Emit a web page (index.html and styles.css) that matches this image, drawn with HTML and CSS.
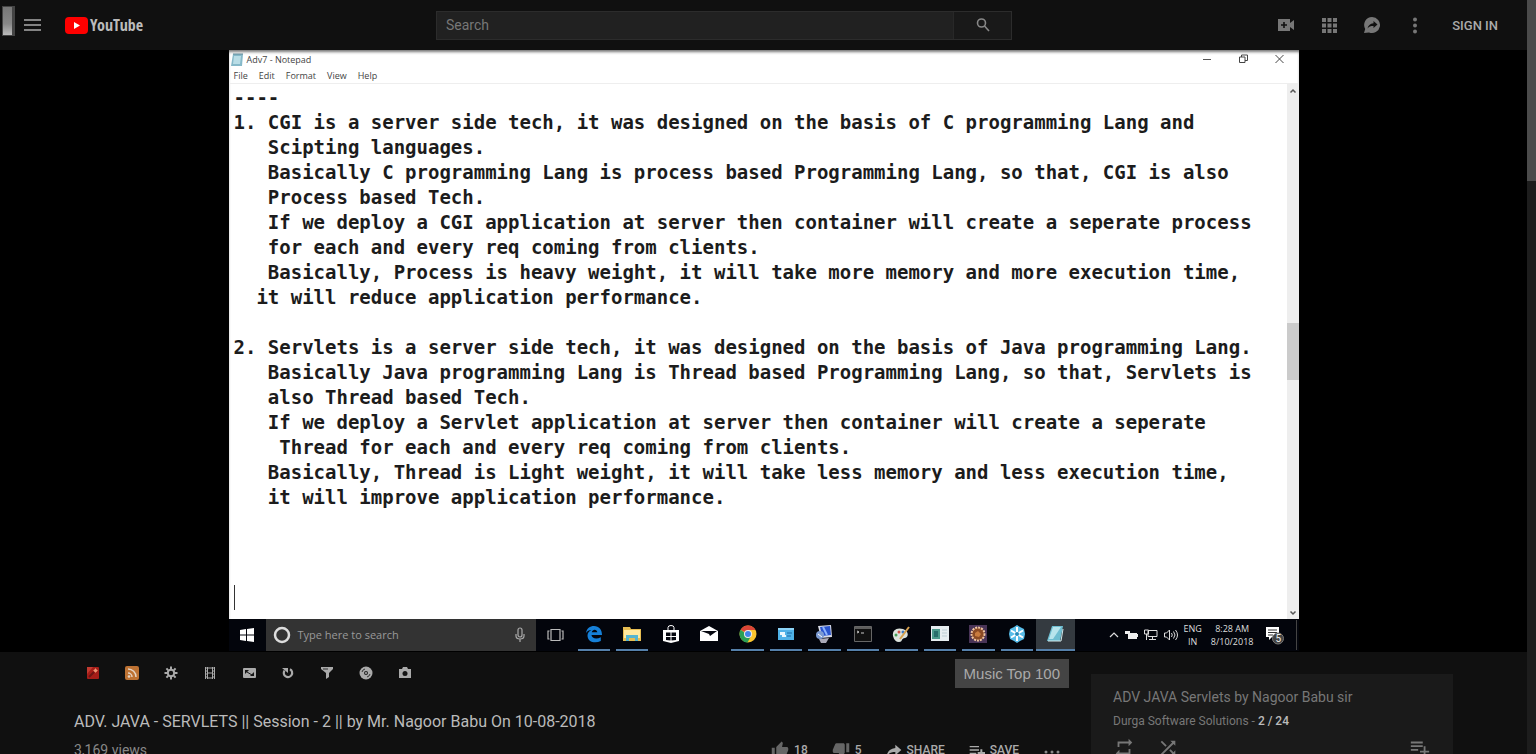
FILE: index.html
```html
<!DOCTYPE html>
<html lang="en">
<head>
<meta charset="utf-8">
<title>ADV. JAVA - SERVLETS || Session - 2 - YouTube</title>
<link rel="stylesheet" href="styles.css">
</head>
<body>
<div class="page">
  <header class="masthead">
    <span class="side-tab"></span>
    <button class="icon-btn menu" aria-label="Menu"><svg width="18" height="14" viewBox="0 0 18 14" stroke="#aaa" stroke-width="1.6"><path d="M0 2h17M0 7h17M0 12h17"/></svg></button>
    <a class="logo" href="#"><svg width="23" height="17" viewBox="0 0 23 17"><rect width="23" height="17" rx="4" fill="#f00"/><path d="M9 5l6 3.500-6 3.500z" fill="#fff"/></svg><span class="logo-text">YouTube</span></a>
    <form class="search">
      <input type="text" placeholder="Search" aria-label="Search">
      <button type="button" aria-label="Search"><svg width="16" height="16" viewBox="0 0 16 16" fill="none" stroke="#888" stroke-width="1.600"><circle cx="6.500" cy="6" r="4"/><path d="M9.500 9l4.500 5"/></svg></button>
    </form>
    <nav class="top-actions">
      <button class="icon-btn" aria-label="Create"><svg width="20" height="20" viewBox="0 0 20 20"><path fill="#777" d="M2 4h12v4l4-3v10l-4-3v4H2z"/><path d="M8 7v6M5 10h6" stroke="#101010" stroke-width="1.600"/></svg></button>
      <button class="icon-btn" aria-label="Apps"><svg width="20" height="20" viewBox="0 0 20 20" fill="#777"><path d="M3 3h4v4H3zM8.500 3h4v4h-4zM14 3h4v4h-4zM3 8.500h4v4H3zM8.500 8.500h4v4h-4zM14 8.500h4v4h-4zM3 14h4v4H3zM8.500 14h4v4h-4zM14 14h4v4h-4z"/></svg></button>
      <button class="icon-btn" aria-label="Messages"><svg width="20" height="20" viewBox="0 0 20 20"><path fill="#777" d="M10 2a8 8 0 1 1-3 15.400L2 18l1.200-4A8 8 0 0 1 10 2z"/><path fill="#101010" d="M11.500 6l4 3.500-4 3.500v-2c-3 0-4.500.6-6 2.500.5-3 2.500-5 6-5.300z"/></svg></button>
      <button class="icon-btn" aria-label="Settings"><svg width="20" height="20" viewBox="0 0 20 20" fill="#777"><circle cx="10" cy="4.500" r="2"/><circle cx="10" cy="10.500" r="2"/><circle cx="10" cy="16.500" r="2"/></svg></button>
    </nav>
    <a class="sign-in" href="#">SIGN IN</a>
  </header>

  <section class="player">
    <div class="video">
      <div class="titlebar">
        <svg width="12" height="13" viewBox="0 0 12 13"><path d="M2 1h10l-1 12H0z" fill="#86b9c9"/><path d="M3 3h7l-1 8H2z" fill="#b9dde6"/><path d="M2 1h10" stroke="#658a98"/></svg>
        <span>Adv7 - Notepad</span>
        <div class="win-buttons">
          <svg width="9" height="10" viewBox="0 0 9 10" stroke="#555"><path d="M0 5.500h8"/></svg>
          <svg width="9" height="10" viewBox="0 0 9 10" fill="none" stroke="#444"><path d="M.5 3h5.500v5.500H.5zM2.500 3V1h6v5.500H6"/></svg>
          <svg width="9" height="10" viewBox="0 0 9 10" stroke="#444"><path d="M.5 1l8 8M8.500 1l-8 8"/></svg>
        </div>
      </div>
      <div class="menubar"><span>File</span><span>Edit</span><span>Format</span><span>View</span><span>Help</span></div>
      <div class="editor">
<pre>----
1. CGI is a server side tech, it was designed on the basis of C programming Lang and
   Scipting languages.
   Basically C programming Lang is process based Programming Lang, so that, CGI is also
   Process based Tech.
   If we deploy a CGI application at server then container will create a seperate process
   for each and every req coming from clients.
   Basically, Process is heavy weight, it will take more memory and more execution time,
  it will reduce application performance.

2. Servlets is a server side tech, it was designed on the basis of Java programming Lang.
   Basically Java programming Lang is Thread based Programming Lang, so that, Servlets is
   also Thread based Tech.
   If we deploy a Servlet application at server then container will create a seperate
    Thread for each and every req coming from clients.
   Basically, Thread is Light weight, it will take less memory and less execution time,
   it will improve application performance.


<span class="blank"></span>
<span class="caret"></span></pre>
        <div class="editor-scroll">
          <svg width="8" height="6" viewBox="0 0 8 6" fill="none" stroke="#555" stroke-width="1.500"><path d="M1.500 4.500L4 2l2.500 2.500"/></svg>
          <span class="editor-thumb"></span>
          <svg width="8" height="6" viewBox="0 0 8 6" fill="none" stroke="#555" stroke-width="1.500"><path d="M1.500 1.500L4 4l2.500-2.500"/></svg>
        </div>
      </div>
      <div class="taskbar">
        <div class="start"><svg width="14" height="14" viewBox="0 0 14 14" fill="#fff"><path d="M0 2l6-1v5.500H0zM7 1l7-1v6.500H7zM0 7.500h6V13l-6-1zM7 7.500h7V14l-7-1z"/></svg></div>
        <div class="task-search">
          <svg width="18" height="18" viewBox="0 0 18 18" fill="none" stroke="#ddd" stroke-width="2.500"><circle cx="9" cy="9" r="7"/></svg>
          <span>Type here to search</span>
          <svg width="12" height="16" viewBox="0 0 12 16" fill="none" stroke="#aaa" stroke-width="1.200"><rect x="4" y="1" width="4" height="9" rx="2"/><path d="M2 7v2a4 3 0 0 0 8 0V7M6 12v3"/></svg>
        </div>
        <div class="task-view"><svg width="17" height="14" viewBox="0 0 17 14" fill="none" stroke="#bbb" stroke-width="1.200"><path d="M4 1.500h9v11H4zM2.500 3H1v8h1.500M14.500 3H16v8h-1.500"/></svg></div>
        <div class="apps">
          <span class="app open"><svg width="18" height="18" viewBox="0 0 18 18"><path fill="#1680d8" d="M1 8c.6-4.500 4-7 8-7 5 0 8 3.500 8 9H6.500c.3 3.500 5 4.500 9.300 2.200V16C10 19 2.500 17 2.500 10.500 2.500 8 4 6 6.500 5 4 5 2.200 6.200 1 8zm5.700-.8h5.600C12 3.800 7.500 3.800 6.700 7.200z"/></svg></span>
          <span class="app open"><svg width="18" height="16" viewBox="0 0 18 16"><path fill="#e6bd52" d="M0 1h7l1 2h10v12H0z"/><path fill="#ffe9a0" d="M1 4h16v8H1z"/><path fill="#55b5d0" d="M3 9h12v6h-3v-3H6v3H3z"/></svg></span>
          <span class="app"><svg width="18" height="18" viewBox="0 0 18 18"><path d="M6 5V2.500a3 2 0 0 1 6 0V5" fill="none" stroke="#fff"/><path d="M1 5h16v11l-8 2-8-2z" fill="#fff"/><path fill="#05070f" d="M4 7.500h4.500v3.500H4zM9.500 7.500H14V11H9.500zM4 12h4.500v3.500L4 15zM9.500 12H14v3l-4.500.5z"/></svg></span>
          <span class="app"><svg width="20" height="16" viewBox="0 0 20 16"><path d="M1 5l9-5 9 5v10H1z" fill="#fff"/><path d="M2 5h16l-7 5-1-2z" fill="#05070f"/></svg></span>
          <span class="app open"><svg width="18" height="18" viewBox="0 0 18 18"><circle cx="9" cy="9" r="8.500" fill="#fbc52f"/><path d="M9 9L1.600 4.800A8.500 8.500 0 0 1 16.500 5H9z" fill="#dc4437"/><path d="M1.600 4.800A8.500 8.500 0 0 0 8.500 17.500L11.500 12z" fill="#2b9f56"/><circle cx="9" cy="9" r="4" fill="#eee"/><circle cx="9" cy="9" r="3" fill="#4285e8"/></svg></span>
          <span class="app open"><svg width="18" height="14" viewBox="0 0 18 14"><path d="M1 1h16v12H1z" fill="#4fb2e8"/><path d="M1 1h16v2H1z" fill="#8cd4f8"/><path d="M3 5h5v3H3zM5 8h4v2H5z" fill="#e6f7ff"/><path d="M10 6h5M10 9h4" stroke="#1b6aa8"/></svg></span>
          <span class="app open"><svg width="18" height="18" viewBox="0 0 18 18"><path d="M3 1l13-1 1 12-11 1z" fill="#d9dce8"/><path d="M5 2l10-1 1 9-9 1z" fill="#2853cd"/><path d="M8 2l4 8" stroke="#8fb5ff" stroke-width="2"/><path d="M4 14l10-1-3 5H6z" fill="#aaa9b8"/><circle cx="5" cy="10" r="4" fill="#7c9bd3"/><path d="M3 9l4 3" stroke="#fff"/></svg></span>
          <span class="app open"><svg width="18" height="16" viewBox="0 0 18 16"><path d="M.5.5h17v15H.5z" fill="#111" stroke="#666"/><path d="M1 2h16" stroke="#aaa"/><path d="M3 5l2 1-2 1M7 7h3" fill="none" stroke="#ccc"/></svg></span>
          <span class="app open"><svg width="20" height="18" viewBox="0 0 20 18"><path d="M2 11C1 5 6 2 12 4c6 2 6 8 2 9-4 0-2 4-6 4-3 0-5-2-6-6z" fill="#dce2dc"/><circle cx="5" cy="10" r="1.500" fill="#45a058"/><circle cx="8" cy="7" r="1.500" fill="#ce5143"/><circle cx="12" cy="7" r="1.500" fill="#3d79c1"/><path d="M9 14l9-12" stroke="#d6a04e" stroke-width="2"/></svg></span>
          <span class="app open"><svg width="18" height="16" viewBox="0 0 18 16"><path d="M0 0h18v15H0z" fill="#e6edf0"/><path d="M1 3h8v10H1z" fill="#4c9a8c"/><path d="M3 5h4v6H3z" fill="#286e6b"/><path d="M11 4h5M11 7h5M11 10h5" stroke="#bbcdd3"/></svg></span>
          <span class="app open"><svg width="18" height="18" viewBox="0 0 18 18"><path d="M0 0h18v18H0z" fill="#493457"/><circle cx="9" cy="9" r="6.500" fill="#8b4b25" stroke="#f0c6a2" stroke-width="2" stroke-dasharray="2 1"/><path d="M6 8l3-2 3 3-2 3-4-1z" fill="#c87b3e"/></svg></span>
          <span class="app open"><svg width="18" height="18" viewBox="0 0 18 18"><path d="M9 0l3 2 4 2 1 5-1 5-4 2-3 2-3-2-4-2-1-5 1-5 4-2z" fill="#58bde9"/><path d="M9 2v14M3 5.500l12 7M3 12.500l12-7" stroke="#fff" stroke-width="2"/><circle cx="9" cy="9" r="2" fill="#248bbb"/></svg></span>
          <span class="app open active"><svg width="18" height="18" viewBox="0 0 18 18"><path d="M6 1h11l-3 15H1z" fill="#6ebdd0"/><path d="M7 2h8L7 14H3z" fill="#b7e4ec"/><path d="M2 16h13l2-12" fill="none" stroke="#d5ebed"/></svg></span>
        </div>
        <div class="tray">
          <svg width="10" height="8" viewBox="0 0 10 8" fill="none" stroke="#ddd" stroke-width="1.200"><path d="M1 6l4-4 4 4"/></svg>
          <svg width="13" height="10" viewBox="0 0 13 10" fill="#eee"><path d="M3 3h9v6H3zM0 1h5v3H0zM12 4h1v3h-1z"/></svg>
          <svg width="14" height="12" viewBox="0 0 14 12" fill="none" stroke="#ddd"><path d="M4 1.500h9v6H4zM8.500 8v2M5 10.500h7M.5 1h4v4h-4zM2.500 5v6"/></svg>
          <svg width="14" height="12" viewBox="0 0 14 12" fill="none" stroke="#ddd"><path d="M.5 4h2l3-3v10l-3-3h-2zM7.500 4q1.500 2 0 4M9.500 2.500q3 3.500 0 7M11.500 1q4 5 0 10"/></svg>
          <span class="tray-text">ENG<br>IN</span>
          <span class="tray-text clock">8:28 AM<br>8/10/2018</span>
          <svg class="notice" width="20" height="20" viewBox="0 0 20 20"><path d="M1 2h13v10H7l-3 3v-3H1z" fill="#fff"/><path d="M3 5h9M3 7.500h9M3 10h5" stroke="#333"/><circle cx="13" cy="13.500" r="5.500" fill="#444" stroke="#777"/><text x="10.500" y="17" font-size="10" fill="#eee">5</text></svg>
          <span class="show-desktop"></span>
        </div>
      </div>
    </div>
  </section>

  <main class="below">
    <section class="primary">
      <div class="tools">
        <button class="icon-btn" aria-label="Magic"><svg width="14" height="14" viewBox="0 0 14 14"><rect x="1" y="1" width="12" height="12" rx="1" fill="#a51d18"/><path d="M1 1h6L1 8z" fill="#c23a30"/><path d="M3 11l5-5" stroke="#6c1515" stroke-width="2"/><circle cx="9.500" cy="4.500" r="1.500" fill="#ffb08a"/><path d="M9.500 2v5M7 4.500h5" stroke="#e8896a" stroke-width=".6"/></svg></button>
        <button class="icon-btn" aria-label="Feed"><svg width="14" height="14" viewBox="0 0 14 14"><rect width="14" height="14" rx="2" fill="#bd7233"/><g fill="none" stroke="#e4d4c5" stroke-width="1.500"><path d="M3 7a4 4 0 0 1 4 4M3 3a8 8 0 0 1 8 8"/></g><circle cx="4" cy="10.500" r="1.300" fill="#e4d4c5"/></svg></button>
        <button class="icon-btn" aria-label="Options"><svg width="14" height="14" viewBox="0 0 14 14" fill="none" stroke="#aaa"><circle cx="7" cy="7" r="3.200" stroke-width="2"/><path stroke-width="2" d="M7 .5V3M7 11v2.500M.5 7H3M11 7h2.500M2.400 2.400l1.800 1.800M9.800 9.800l1.800 1.800M11.600 2.400L9.800 4.200M4.200 9.800l-1.800 1.800"/></svg></button>
        <button class="icon-btn" aria-label="Cinema"><svg width="14" height="14" viewBox="0 0 14 14" fill="none" stroke="#aaa"><path d="M2.500 1v12M4.500 1v12M9.500 1v12M11.500 1v12M2 2h3M2 5h3M2 8h3M2 11h3M9 2h3M9 5h3M9 8h3M9 11h3M5 2h4M5 7h4M5 12h4"/></svg></button>
        <button class="icon-btn" aria-label="Resize"><svg width="14" height="14" viewBox="0 0 14 14"><rect x="1" y="2" width="13" height="10" rx="1" fill="#aaa"/><path d="M3 4h4L3 8zM12 10H8l4-4z" fill="#151515"/><path d="M5 6l5 3" stroke="#151515"/></svg></button>
        <button class="icon-btn" aria-label="Repeat"><svg width="14" height="14" viewBox="0 0 14 14"><path d="M9 3.200a4.200 4.200 0 1 1-5.500 1.300" fill="none" stroke="#aaa" stroke-width="2.200"/><path d="M1 2h6v5z" fill="#aaa"/></svg></button>
        <button class="icon-btn" aria-label="Filter"><svg width="14" height="14" viewBox="0 0 14 14"><path d="M1 1h12v2L9 7v4l-3 2V7L1 3z" fill="#aaa"/><path d="M3 3h5" stroke="#333"/></svg></button>
        <button class="icon-btn" aria-label="Disc"><svg width="14" height="14" viewBox="0 0 14 14"><circle cx="7" cy="7" r="6.500" fill="#aaa"/><circle cx="7" cy="7" r="2" fill="#222"/><circle cx="7" cy="7" r="1" fill="#aaa"/><path d="M3 6a4 4 0 0 1 3-3M11 8a4 4 0 0 1-3 3" fill="none" stroke="#333"/></svg></button>
        <button class="icon-btn" aria-label="Screenshot"><svg width="14" height="14" viewBox="0 0 14 14"><path d="M1 3h3l1-2h4l1 2h3v9H1z" fill="#aaa"/><circle cx="7" cy="7.500" r="2.500" fill="#151515"/></svg></button>
        <button class="music">Music Top 100</button>
      </div>
      <h1>ADV. JAVA - SERVLETS || Session - 2 || by Mr. Nagoor Babu On 10-08-2018</h1>
      <div class="info">
        <span class="views">3,169 views</span>
        <div class="actions">
          <button class="like"><svg width="18" height="18" viewBox="0 0 24 24" fill="#666"><path d="M1 21h4V9H1v12zm22-11c0-1.100-.9-2-2-2h-6.300l1-4.600c.1-.8-.1-1.300-.5-1.700L14.200.6 7.600 7.200C7.200 7.600 7 8.100 7 8.600V19c0 1.100.9 2 2 2h9c.8 0 1.500-.5 1.800-1.200l3-7c.1-.3.2-.5.2-.8z"/></svg>18</button>
          <button class="dislike"><svg width="18" height="18" viewBox="0 0 24 24" fill="#666"><path d="M15 3H6c-.8 0-1.500.5-1.800 1.200l-3 7c-.1.300-.2.500-.2.800v2c0 1.100.9 2 2 2h6.300l-1 4.600c-.1.800.1 1.300.5 1.700l1 1.100 6.600-6.600c.4-.4.600-.9.600-1.400V5c0-1.100-.9-2-2-2zm4 0v12h4V3z"/></svg>5</button>
          <button class="share"><svg width="16" height="18" viewBox="0 0 24 24" fill="#aaa"><path d="M14 9V4l9 8-9 8v-5C8 15 4 17 1 21c1-7 5-11 13-12z"/></svg>SHARE</button>
          <button class="save"><svg width="16" height="18" viewBox="0 0 24 24" fill="#aaa"><path d="M1 6h14v2H1zM1 11h14v2H1zM1 16h10v2H1zM17 11h3v4h4v3h-4v4h-3v-4h-4v-3h4z"/></svg>SAVE</button>
          <button class="more" aria-label="More"><svg width="18" height="18" viewBox="0 0 18 18" fill="#888"><circle cx="3" cy="11" r="1.500"/><circle cx="9" cy="11" r="1.500"/><circle cx="15" cy="11" r="1.500"/></svg></button>
        </div>
      </div>
    </section>
    <aside class="playlist">
      <h2>ADV JAVA Servlets by Nagoor Babu sir</h2>
      <p>Durga Software Solutions - <b>2 / 24</b></p>
      <div class="playlist-actions">
        <button class="icon-btn" aria-label="Loop"><svg width="22" height="22" viewBox="0 0 24 24" fill="#777"><path d="M7 7h10v3l4-4-4-4v3H5v6h2zM17 17H7v-3l-4 4 4 4v-3h12v-6h-2z"/></svg></button>
        <button class="icon-btn" aria-label="Shuffle"><svg width="22" height="22" viewBox="0 0 24 24" fill="#777"><path d="M10.600 9.200L5.400 4 4 5.400l5.200 5.200zM14.500 4l2 2L4 18.600 5.400 20 18 7.500l2 2V4zm.3 9.400l-1.400 1.400 3.100 3.100-2 2.100H20v-5.500l-2 2z"/></svg></button>
        <button class="icon-btn save-list" aria-label="Save playlist"><svg width="22" height="22" viewBox="0 0 24 24" fill="#777"><path d="M2 5h13v2H2zM2 9h13v2H2zM2 13h8v2H2zM16 10h2v5h4v2h-4v4h-2v-4h-4v-2h4z"/></svg></button>
      </div>
    </aside>
  </main>
</div>
<div class="page-scroll"><span></span></div>
</body>
</html>
```
FILE: styles.css
```css
* { box-sizing: border-box; }
body { margin: 0; height: 100vh; overflow: hidden; display: flex; background: #101010; color: #aaa; font-family: Roboto, "Liberation Sans", sans-serif; }
button { font: inherit; color: inherit; background: none; border: 0; padding: 0; }
svg { display: block; flex: none; }
a { color: inherit; text-decoration: none; }
.page { flex: 1; min-width: 0; }
.page-scroll { width: 9px; background: #1d1d1d; }
.page-scroll span { display: block; height: 24%; background: #4b4b4b; }
.icon-btn { display: flex; align-items: center; justify-content: center; }

.masthead { display: flex; align-items: center; height: 50px; background: #101010; }
.side-tab { width: 13px; height: 30px; margin: 0 9px 8px 2px; border: 1px solid #444; border-right: 3px solid #444; background: linear-gradient(#777, #888 60%, #bbb); }
.menu { margin-right: 23px; }
.logo { display: flex; align-items: center; gap: 2px; width: 371px; }
.logo-text { font-family: "Open Sans Condensed", "Roboto Condensed", "Liberation Sans Narrow", Roboto, sans-serif; font-weight: 700; font-size: 16px; color: #bbb; }
.search { display: flex; width: 576px; height: 29px; border: 1px solid #2c2c2c; }
.search input { flex: 1; border: 0; border-right: 1px solid #282828; outline: 0; padding: 0 9px; background: #212121; color: #888; font: 14px Roboto, sans-serif; }
.search input::placeholder { color: #777; opacity: 1; }
.search button { width: 57px; display: flex; align-items: center; justify-content: center; background: #191919; }
.top-actions { display: flex; gap: 23px; margin-left: auto; }
.sign-in { margin: 0 29px 0 27px; font-size: 13px; font-weight: 500; color: #aaa; }

.player { background: #000; display: flex; justify-content: center; }
.video { width: 1070px; max-width: 100%; aspect-ratio: 16 / 9; display: flex; flex-direction: column; background: #fff; color: #444; font-family: "Open Sans", sans-serif; border-bottom: 1px solid #000; box-shadow: inset 0 3px 3px -1px #777; }
.titlebar { display: flex; align-items: center; gap: 4px; height: 18px; padding-left: 2px; font-size: 9px; }
.win-buttons { display: flex; gap: 27px; margin-left: auto; padding-right: 15px; }
.menubar { display: flex; gap: 11px; height: 16px; line-height: 16px; padding-left: 5px; font-size: 9px; border-bottom: 1px solid #eee; }
.editor { flex: 1; display: flex; min-height: 0; }
.editor pre { flex: 1; min-width: 0; margin: 0; padding: 1px 0 0 5px; font: bold 19px/25px "DejaVu Sans Mono", monospace; color: #1c1c1c; }
.caret { display: inline-block; width: 1px; height: 25px; background: #333; }
.editor-scroll { width: 12px; background: #eee; display: flex; flex-direction: column; align-items: center; justify-content: space-between; padding: 4px 0 3px; }
.editor-thumb { width: 12px; height: 57px; background: #cbcbcb; }

.taskbar { display: flex; align-items: stretch; height: 32px; background: #03050c; color: #ddd; }
.start { width: 37px; display: grid; place-items: center; }
.task-search { width: 270px; display: flex; align-items: center; gap: 7px; padding: 0 10px 0 7px; background: #333; font-size: 11px; color: #999; }
.task-search span { flex: 1; }
.task-view { width: 39px; display: grid; place-items: center; }
.apps { flex: 1; display: grid; grid-template-columns: repeat(13, 1fr); }
.app { display: grid; place-items: center; margin: 0 3px; border-bottom: 2px solid transparent; }
.app.open { border-color: #5580aa; }
.app.active { margin: 0; background: #343a40; }
.tray { width: 224px; display: flex; align-items: center; gap: 6px; padding-left: 34px; }
.tray-text { font-size: 9px; line-height: 13px; text-align: center; }
.clock { margin-left: 3px; }
.notice { margin-left: 6px; font-family: Roboto, sans-serif; }
.show-desktop { width: 1px; height: 30px; margin: 0 2px 0 auto; background: #444; }

.below { display: flex; align-items: flex-start; gap: 22px; padding: 0 74px; }
.primary { flex: 1; }
.tools { display: flex; align-items: center; gap: 25px; padding: 7px 0 0 12px; }
.music { margin-left: auto; height: 29px; padding: 0 9px; background: #444; color: #aaa; font: 15px "Liberation Sans", sans-serif; }
h1 { margin: 24px 0 9px; font-size: 16px; line-height: 20px; font-weight: 400; color: #bbb; }
.info { display: flex; align-items: flex-start; }
.views { font-size: 14px; line-height: 18px; color: #888; }
.actions { display: flex; gap: 24px; margin-left: auto; padding-right: 8px; font-size: 12px; font-weight: 500; }
.actions button { display: flex; align-items: center; gap: 5px; }
.playlist { width: 362px; margin-top: 22px; padding: 13px 22px; background: #1a1a1a; color: #777; }
.playlist h2 { margin: 0; font-size: 14px; line-height: 20px; font-weight: 400; }
.playlist p { margin: 4px 0 6px; font-size: 12px; line-height: 20px; }
.playlist b { font-weight: 500; color: #bbb; }
.playlist-actions { display: flex; gap: 22px; }
.save-list { margin-left: auto; }
```
